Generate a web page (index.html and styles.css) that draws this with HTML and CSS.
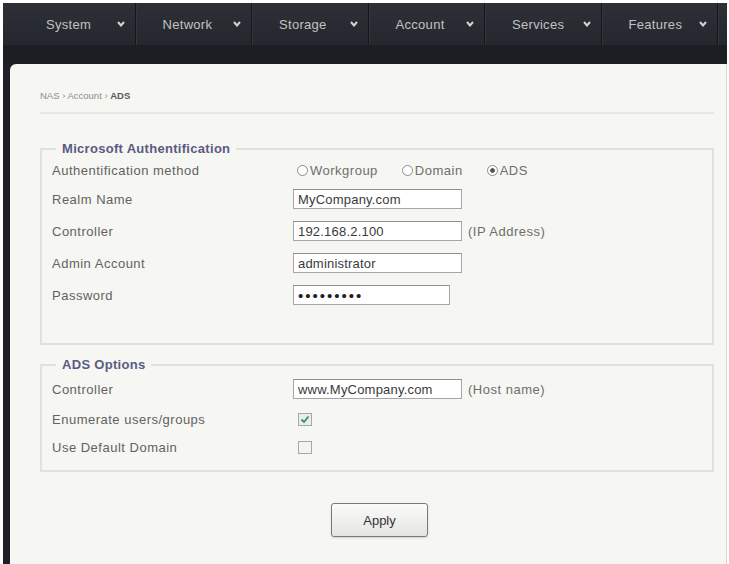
FILE: index.html
```html
<!DOCTYPE html>
<html lang="en">
<head>
    <meta charset="UTF-8">
    <meta name="viewport" content="width=device-width, initial-scale=1.0">
    <title>NAS - Account - ADS</title>
    <link rel="stylesheet" href="styles.css">
</head>
<body>
    <div class="frame">
        <div class="nav">
            <div class="nav-items">
                <div class="nav-item"><span>System</span><svg class="arrow" width="8" height="6" viewBox="0 0 8 6"><polyline points="1,1 4,4.5 7,1"/></svg></div>
                <div class="nav-item"><span>Network</span><svg class="arrow" width="8" height="6" viewBox="0 0 8 6"><polyline points="1,1 4,4.5 7,1"/></svg></div>
                <div class="nav-item"><span>Storage</span><svg class="arrow" width="8" height="6" viewBox="0 0 8 6"><polyline points="1,1 4,4.5 7,1"/></svg></div>
                <div class="nav-item"><span>Account</span><svg class="arrow" width="8" height="6" viewBox="0 0 8 6"><polyline points="1,1 4,4.5 7,1"/></svg></div>
                <div class="nav-item"><span>Services</span><svg class="arrow" width="8" height="6" viewBox="0 0 8 6"><polyline points="1,1 4,4.5 7,1"/></svg></div>
                <div class="nav-item"><span>Features</span><svg class="arrow" width="8" height="6" viewBox="0 0 8 6"><polyline points="1,1 4,4.5 7,1"/></svg></div>
            </div>
            <div class="nav-strip"></div>
        </div>

        <div class="panel">
            <div class="breadcrumb">NAS &rsaquo; Account &rsaquo; <b>ADS</b></div>

            <fieldset>
                <legend>Microsoft Authentification</legend>
                <div class="row row-radio">
                    <label class="label">Authentification method</label>
                    <div class="radios">
                        <label class="radio"><input type="radio" name="method">Workgroup</label>
                        <label class="radio"><input type="radio" name="method">Domain</label>
                        <label class="radio"><input type="radio" name="method" checked>ADS</label>
                    </div>
                </div>
                <div class="row">
                    <label class="label">Realm Name</label>
                    <input class="field" type="text" value="MyCompany.com">
                </div>
                <div class="row">
                    <label class="label">Controller</label>
                    <input class="field" type="text" value="192.168.2.100">
                    <span class="hint">(IP Address)</span>
                </div>
                <div class="row">
                    <label class="label">Admin Account</label>
                    <input class="field" type="text" value="administrator">
                </div>
                <div class="row">
                    <label class="label">Password</label>
                    <input class="field field-short" type="password" value="secret123">
                </div>
            </fieldset>

            <fieldset class="options">
                <legend>ADS Options</legend>
                <div class="row">
                    <label class="label">Controller</label>
                    <input class="field" type="text" value="www.MyCompany.com">
                    <span class="hint">(Host name)</span>
                </div>
                <div class="row row-check">
                    <label class="label">Enumerate users/groups</label>
                    <span class="check checked"><svg width="10" height="9" viewBox="0 0 10 9"><polyline points="1.5,4.5 4,7 8.5,1.5"/></svg></span>
                </div>
                <div class="row row-check">
                    <label class="label">Use Default Domain</label>
                    <span class="check"></span>
                </div>
            </fieldset>

            <div class="actions">
                <button>Apply</button>
            </div>
        </div>
    </div>
</body>
</html>
```

FILE: styles.css
```css
body {
    margin: 0;
    background: #ffffff;
    font-family: "Liberation Sans", Arial, sans-serif;
}
.frame {
    margin: 3px 2px 0 3px;
    height: 561px;
    background: #1e2026;
    display: flex;
    flex-direction: column;
}
.nav {
    height: 61px;
    display: flex;
    flex-direction: column;
}
.nav-items {
    height: 42px;
    padding-left: 16px;
    display: flex;
    background: linear-gradient(#2e3037, #25272e);
}
.nav-item {
    width: 116.5px;
    box-sizing: border-box;
    padding: 0 10px 0 27px;
    display: flex;
    align-items: center;
    justify-content: space-between;
    color: #c2c2c2;
    font-size: 13px;
    letter-spacing: 0.3px;
    border-right: 1px solid #15161a;
    box-shadow: 1px 0 0 #34363d;
}
.arrow polyline {
    fill: none;
    stroke: #d4d4d4;
    stroke-width: 2;
}
.nav-strip {
    flex: 1;
    background: #1c1e24;
}
.panel {
    flex: 1;
    margin-left: 7px;
    background: #f6f6f2;
    border-top-left-radius: 6px;
    border-right: 1px solid #d6d6d2;
    padding: 0 12px 0 30px;
}
.breadcrumb {
    padding: 26px 0 10px;
    font-size: 9.5px;
    line-height: 12px;
    color: #8e8e8e;
    border-bottom: 2px solid #e6e6e2;
}
.breadcrumb b {
    color: #5a5a5a;
}
fieldset {
    margin: 27px 0 0;
    padding: 0 10px 32px;
    border: 2px solid #e0e0dc;
}
fieldset.options {
    margin-top: 12px;
    padding-bottom: 9px;
}
legend {
    margin-left: 4px;
    padding: 0 6px;
    font-size: 13px;
    line-height: 16px;
    font-weight: bold;
    letter-spacing: 0.3px;
    color: #5a5a84;
}
.row {
    height: 32px;
    display: flex;
    align-items: center;
    font-size: 13px;
    letter-spacing: 0.5px;
    color: #626262;
}
.row-radio {
    height: 26px;
}
.row-check {
    height: 28px;
}
.label {
    width: 241px;
    flex-shrink: 0;
}
.radios {
    display: flex;
    margin-left: 4px;
    color: #6e6e6e;
}
.radio {
    display: flex;
    align-items: center;
    margin-right: 24px;
}
.radio input {
    appearance: none;
    width: 11px;
    height: 11px;
    margin: 0 2px 0 0;
    border: 1px solid #8c8c8c;
    border-radius: 50%;
    background: #fff;
}
.radio input:checked {
    background: radial-gradient(circle, #555 0, #555 2px, #fff 2.6px);
}
.field {
    width: 169px;
    height: 20px;
    box-sizing: border-box;
    margin: 0;
    padding: 0 4px;
    border: 1px solid #a6a6a6;
    border-top-color: #8e8e8e;
    background: #fff;
    font-family: "Liberation Sans", Arial, sans-serif;
    font-size: 13px;
    letter-spacing: 0.2px;
    color: #3a3a3a;
}
.field-short {
    width: 157px;
    font-size: 15px;
    letter-spacing: 2px;
    color: #222;
}
.hint {
    margin-left: 6px;
    color: #6e6e6e;
}
.check {
    width: 14px;
    height: 13px;
    box-sizing: border-box;
    margin-left: 5px;
    border: 1px solid #a8a8a8;
    background: #f4f4f0;
    display: flex;
    align-items: center;
    justify-content: center;
}
.check.checked {
    background: #e8efe9;
}
.check polyline {
    fill: none;
    stroke: #3c8a62;
    stroke-width: 1.8;
}
.actions {
    display: flex;
    justify-content: center;
    padding: 31px 0 0 5px;
}
button {
    width: 97px;
    height: 34px;
    border: 1px solid #7a7a7a;
    border-radius: 3px;
    background: linear-gradient(#fbfbfb, #e4e4e2);
    box-shadow: 0 1px 2px rgba(0, 0, 0, 0.15);
    font-family: "Liberation Sans", Arial, sans-serif;
    font-size: 13px;
    color: #333;
}
```
